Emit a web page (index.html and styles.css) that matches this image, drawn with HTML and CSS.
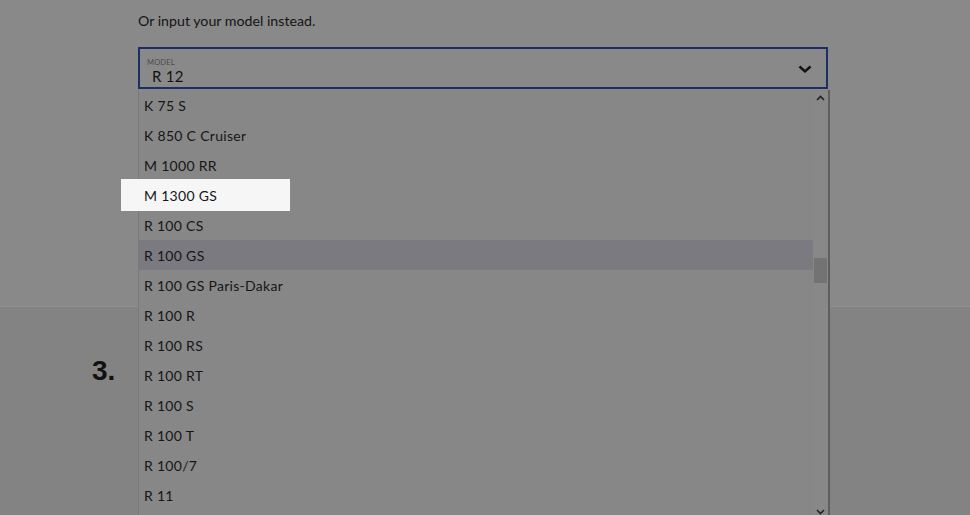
FILE: index.html
```html
<!DOCTYPE html>
<html>
<head>
<meta charset="utf-8">
<link rel="stylesheet" href="styles.css">
</head>
<body>
<section class="top">
  <div class="wrap">
    <p class="hint">Or input your model instead.</p>
    <div class="field">
      <div class="field-text">
        <span class="label">MODEL</span>
        <span class="value">R 12</span>
      </div>
      <svg class="chev" width="14" height="10" viewBox="0 0 14 10"><path d="M1.5 2.5 L7 7.5 L12.5 2.5" fill="none" stroke="#111" stroke-width="2.4"/></svg>
    </div>
  </div>
</section>
<section class="bottom">
  <div class="step">3.</div>
</section>

<div class="list">
  <ul class="items">
    <li>K 75 S</li>
    <li>K 850 C Cruiser</li>
    <li>M 1000 RR</li>
    <li>M 1300 GS</li>
    <li>R 100 CS</li>
    <li class="hover">R 100 GS</li>
    <li>R 100 GS Paris-Dakar</li>
    <li>R 100 R</li>
    <li>R 100 RS</li>
    <li>R 100 RT</li>
    <li>R 100 S</li>
    <li>R 100 T</li>
    <li>R 100/7</li>
    <li>R 11</li>
  </ul>
  <div class="scrollbar">
    <svg class="arrow" width="9" height="6" viewBox="0 0 9 6"><path d="M1 5 L4.5 1.5 L8 5" fill="none" stroke="#222" stroke-width="1.6"/></svg>
    <div class="track"><div class="thumb"></div></div>
    <svg class="arrow" width="9" height="6" viewBox="0 0 9 6"><path d="M1 1 L4.5 4.5 L8 1" fill="none" stroke="#222" stroke-width="1.6"/></svg>
  </div>
</div>

<div class="focus-item">M 1300 GS</div>
</body>
</html>
```
FILE: styles.css
```css
html, body {
  margin: 0;
  padding: 0;
}
body {
  width: 970px;
  height: 515px;
  overflow: hidden;
  background: #838383;
  font-family: Lato, "Noto Sans", sans-serif;
  color: #111;
  position: relative;
}
.top {
  height: 306px;
  background: #898989;
  border-bottom: 1px solid #8f8f8f;
}
.wrap {
  padding-left: 138px;
  width: 690px;
}
.hint {
  margin: 0;
  padding-top: 11px;
  font-size: 14.2px;
  line-height: 20px;
  color: #141414;
}
.field {
  margin-top: 16px;
  height: 38px;
  border: 2px solid #1d2e66;
  display: flex;
  align-items: center;
  justify-content: space-between;
  padding: 0 14px 0 7px;
}
.field-text {
  display: flex;
  flex-direction: column;
  padding-top: 6px;
}
.label {
  font-size: 7.5px;
  letter-spacing: 0.2px;
  color: #4a4a4a;
  line-height: 9px;
}
.value {
  font-size: 15px;
  line-height: 18px;
  padding-left: 5px;
  letter-spacing: 0.3px;
  color: #111;
}
.chev {
  margin-top: 1px;
}
.bottom {
  height: 208px;
  padding-left: 92px;
}
.step {
  padding-top: 46px;
  font-family: "Liberation Sans", Arial, sans-serif;
  font-weight: 700;
  font-size: 28px;
  line-height: 36px;
  color: #111;
}
.list {
  position: absolute;
  left: 138px;
  top: 90px;
  width: 689px;
  height: 430px;
  background: #878787;
  border-left: 1px solid #7a7a7a;
  border-right: 2px solid #5e5e5e;
  display: flex;
}
.items {
  list-style: none;
  margin: 0;
  padding: 0;
  flex: 1;
}
.items li {
  height: 30px;
  line-height: 31px;
  padding-left: 5px;
  font-size: 14px;
  letter-spacing: 0.3px;
  color: #161616;
}
.items li.hover {
  background: #7b7a81;
}
.scrollbar {
  width: 15px;
  display: flex;
  flex-direction: column;
  align-items: center;
  background: #888888;
}
.arrow {
  margin: 5px 0;
}
.track {
  flex: 1;
  width: 100%;
  position: relative;
}
.thumb {
  margin-top: 152px;
  margin-left: 1px;
  width: 13px;
  height: 25px;
  background: #737373;
}
.focus-item {
  position: absolute;
  left: 121px;
  top: 179px;
  width: 146px;
  height: 32px;
  padding-left: 23px;
  background: #f6f6f6;
  font-family: Lato, "Noto Sans", sans-serif;
  font-size: 14px;
  letter-spacing: 0.3px;
  line-height: 33px;
  color: #161616;
}
```
